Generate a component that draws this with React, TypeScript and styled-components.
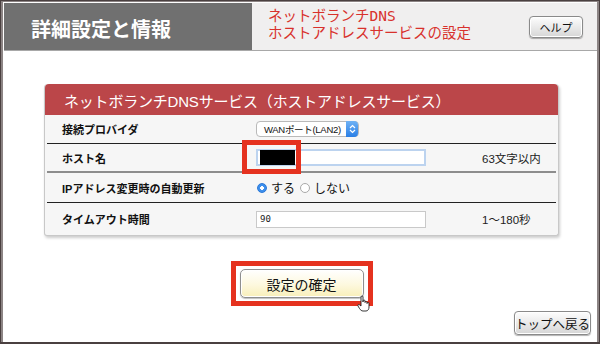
import React from 'react';
import styled, { createGlobalStyle } from 'styled-components';

const GlobalStyle = createGlobalStyle`
  html, body {
    margin: 0;
    padding: 0;
    background: #ffffff;
  }
  body {
    font-family: "Liberation Sans", "Noto Sans CJK JP", sans-serif;
  }
`;

const JP = '"Liberation Sans", "Noto Sans CJK JP", sans-serif';

const Frame = styled.div`
  position: relative;
  box-sizing: border-box;
  width: 600px;
  height: 344px;
  border: 1px solid #4a4040;
  border-bottom-width: 2px;
  box-shadow: inset 2px 0 0 #8c8484, inset -2px 0 0 #8c8484, inset 0 1px 0 #8c8484;
  background: #ffffff;
  display: flex;
  flex-direction: column;
  overflow: hidden;
`;

const Header = styled.header`
  display: flex;
  height: 47px;
  margin: 2px 2px 0 3px;
  border-bottom: 1px solid #a8a8a8;
`;

const HeaderTitle = styled.div`
  width: 248px;
  background: #707070;
  color: #ffffff;
  font-family: ${JP};
  font-weight: bold;
  font-size: 20px;
  display: flex;
  align-items: center;
  padding-left: 27px;
  box-sizing: border-box;
  padding-top: 3px;
`;

const HeaderSub = styled.div`
  flex: 1;
  background: #f0efef;
  display: flex;
  align-items: center;
  padding-left: 16px;
  padding-right: 14px;
`;

const PageName = styled.div`
  flex: 1;
  color: #d8312c;
  font-family: "DejaVu Sans Mono", "Noto Sans CJK JP", monospace;
  font-size: 14.5px;
  line-height: 17px;
  padding-bottom: 3px;
`;

const GrayButton = styled.button<{ $w: number; $h: number; $fs: number }>`
  width: ${(p) => p.$w}px;
  height: ${(p) => p.$h}px;
  padding: 0;
  font-family: ${JP};
  font-size: ${(p) => p.$fs}px;
  color: #111;
  border: 1px solid #8a8a8a;
  border-radius: 4px;
  background: linear-gradient(#fdfdfd, #e8e8e8 55%, #d6d6d6);
  box-shadow: inset 0 0 0 1px #ffffff, 0 1px 1px rgba(0, 0, 0, 0.3);
  display: flex;
  align-items: center;
  justify-content: center;
`;

const Main = styled.main`
  flex: 1;
  position: relative;
  display: flex;
  flex-direction: column;
  align-items: center;
`;

const Panel = styled.section`
  margin-top: 33px;
  width: 513px;
  margin-left: 3px;
  border: 1px solid #c8c8c8;
  border-top: none;
  border-radius: 4px 4px 3px 3px;
  background: #f6f6f6;
  box-shadow: 1px 2px 3px rgba(0, 0, 0, 0.2);
`;

const PanelTitle = styled.h2`
  margin: 0;
  height: 31px;
  background: #bb4649;
  border-radius: 4px 4px 0 0;
  color: #ffffff;
  font-family: ${JP};
  font-weight: normal;
  font-size: 15px;
  letter-spacing: -0.2px;
  display: flex;
  align-items: center;
  padding-left: 19px;
  padding-top: 2px;
  box-sizing: border-box;
`;

const Row = styled.div<{ $h: number; $line?: string }>`
  display: grid;
  grid-template-columns: 209px 226px 1fr;
  align-items: center;
  box-sizing: border-box;
  height: ${(p) => p.$h}px;
  margin: 0 2px;
  border-bottom: ${(p) => p.$line || 'none'};
`;

const Label = styled.div`
  padding-left: 15px;
  font-family: ${JP};
  font-weight: bold;
  font-size: 11px;
  color: #111;
`;

const Note = styled.div`
  font-family: ${JP};
  font-size: 11.5px;
  color: #222;
`;

const Select = styled.div`
  position: relative;
  width: 103px;
  height: 16px;
  box-sizing: border-box;
  border: 1px solid #b9b9b9;
  border-radius: 4px;
  background: #ffffff;
  font-family: ${JP};
  font-size: 9.5px;
  letter-spacing: -0.3px;
  white-space: nowrap;
  color: #111;
  display: flex;
  align-items: center;
  padding-left: 7px;
`;

const SelectArrow = styled.span`
  position: absolute;
  right: 0;
  top: -1px;
  width: 12px;
  height: 16px;
  border-radius: 0 4px 4px 0;
  background: linear-gradient(#6fb2f5, #2a7fe6);
  display: flex;
  align-items: center;
  justify-content: center;
`;

const TextBox = styled.div<{ $focus?: boolean }>`
  width: 170px;
  height: 17px;
  box-sizing: border-box;
  background: #ffffff;
  border: ${(p) => (p.$focus ? '2px solid #bcd3ef' : '1px solid #c9c9c9')};
  font-family: "DejaVu Sans Mono", monospace;
  font-size: 9px;
  color: #222;
  display: flex;
  align-items: center;
  padding-left: 3px;
`;

const Masked = styled.span`
  width: 35px;
  height: 15px;
  background: #000;
  margin-left: -1px;
`;

const HighlightHost = styled.div`
  position: absolute;
  left: -14px;
  top: -9px;
  width: 59px;
  height: 34px;
  box-sizing: border-box;
  border: 5px solid #e5321f;
`;

const Radios = styled.div`
  display: flex;
  align-items: center;
  gap: 4px;
  font-family: ${JP};
  font-size: 12px;
  color: #111;
`;

const Radio = styled.span<{ $on?: boolean }>`
  width: 10px;
  height: 10px;
  border-radius: 50%;
  box-sizing: border-box;
  border: ${(p) => (p.$on ? '1px solid #2a78d8' : '1px solid #a9a9a9')};
  background: ${(p) =>
    p.$on ? 'radial-gradient(circle, #ffffff 0 1.6px, #3d8fec 2px)' : '#ffffff'};
  margin-left: 1px;
`;

const ConfirmWrap = styled.div`
  margin-top: 25px;
  margin-left: 3px;
  padding: 3px 4px;
  border: 5px solid #e5321f;
`;

const ConfirmButton = styled.button`
  width: 124px;
  height: 29px;
  font-family: ${JP};
  font-size: 14px;
  color: #111;
  border: 1px solid #8f8f8f;
  border-radius: 5px;
  background: linear-gradient(#ffffff, #fdf8de 55%, #f8efb9);
  box-shadow: inset 0 0 0 1px #ffffff, 0 1px 1px rgba(0, 0, 0, 0.25);
`;

const Footer = styled.div`
  align-self: flex-end;
  margin-top: auto;
  margin-right: 8px;
  margin-bottom: 7px;
`;

const Cursor = styled.svg`
  position: absolute;
  left: 356px;
  top: 244px;
`;

const Cell = styled.div`
  position: relative;
`;

export default function App() {
  return (
    <>
      <GlobalStyle />
      <Frame>
        <Header>
          <HeaderTitle>詳細設定と情報</HeaderTitle>
          <HeaderSub>
            <PageName>
              ネットボランチDNS
              <br />
              ホストアドレスサービスの設定
            </PageName>
            <GrayButton $w={54} $h={22} $fs={11}>
              ヘルプ
            </GrayButton>
          </HeaderSub>
        </Header>
        <Main>
          <Panel>
            <PanelTitle>ネットボランチDNSサービス（ホストアドレスサービス）</PanelTitle>
            <Row $h={29} $line="1px solid #222">
              <Label>接続プロバイダ</Label>
              <Select>
                WANポート(LAN2)
                <SelectArrow>
                  <svg width="7" height="10" viewBox="0 0 7 10">
                    <path d="M1 4 L3.5 1.5 L6 4 M1 6 L3.5 8.5 L6 6" stroke="#fff" strokeWidth="1.2" fill="none" />
                  </svg>
                </SelectArrow>
              </Select>
              <span />
            </Row>
            <Row $h={29} $line="2px solid #8d8d8d">
              <Label>ホスト名</Label>
              <Cell>
                <TextBox $focus>
                  <Masked />
                </TextBox>
                <HighlightHost />
              </Cell>
              <Note>63文字以内</Note>
            </Row>
            <Row $h={30} $line="1px solid #222">
              <Label>IPアドレス変更時の自動更新</Label>
              <Radios>
                <Radio $on />
                する
                <Radio />
                しない
              </Radios>
              <span />
            </Row>
            <Row $h={32}>
              <Label>タイムアウト時間</Label>
              <TextBox>90</TextBox>
              <Note>1〜180秒</Note>
            </Row>
          </Panel>
          <ConfirmWrap>
            <ConfirmButton>設定の確定</ConfirmButton>
          </ConfirmWrap>
          <Footer>
            <GrayButton $w={77} $h={24} $fs={12.5}>
              トップへ戻る
            </GrayButton>
          </Footer>
          <Cursor width="14" height="17" viewBox="0 0 14 17">
            <path
              d="M4 8 V2 a1 1 0 0 1 2 0 V7 V6 a1 1 0 0 1 2 0 V7.5 a1 1 0 0 1 2 0 V8.5 a1 1 0 0 1 2 0 V12 C12 14 11 16 9 16 H6 C4.5 16 3.5 15 2.5 13.5 L1 11 C0.5 10 1.5 9 2.5 9.8 L4 11 Z"
              fill="#ffffff"
              stroke="#222"
              strokeWidth="0.9"
            />
          </Cursor>
        </Main>
      </Frame>
    </>
  );
}
